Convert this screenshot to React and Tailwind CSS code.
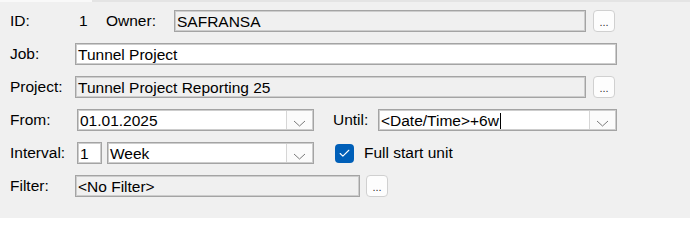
import { Check } from "lucide-react";

const FONT = { fontFamily: '"Liberation Sans", Arial, sans-serif' };

function Box({ value, width, white, caret, className = "" }) {
  return (
    <div
      className={`h-[22px] flex items-center pl-[2px] pt-px border border-[#a4a4a4] shadow-[inset_0_0_0_1px_#cdcdcd] ${white ? "bg-white" : "bg-[#f0f0f0]"} ${className}`}
      style={{ width }}
    >
      <span className="whitespace-nowrap leading-none">{value}</span>
      {caret && <span className="w-px h-[16px] bg-black ml-px" />}
    </div>
  );
}

function Combo({ value, width, caret }) {
  return (
    <div
      className="h-[22px] flex items-stretch bg-white border border-[#a4a4a4] shadow-[inset_0_0_0_1px_#cdcdcd]"
      style={{ width }}
    >
      <div className="flex-1 flex items-center pl-[2px] pt-px">
        <span className="whitespace-nowrap leading-none">{value}</span>
        {caret && <span className="w-px h-[16px] bg-black ml-px" />}
      </div>
      <div className="w-[26px] m-px border-l border-[#d6d6d6] bg-[#fbfbfb] flex items-end justify-center pb-[2px]">
        <svg width="13" height="7" viewBox="0 0 13 7">
          <path d="M1 1 L6.5 6 L12 1" fill="none" stroke="#7a7a7a" strokeWidth="1" />
        </svg>
      </div>
    </div>
  );
}

function Dots() {
  return (
    <button className="w-[22px] h-[22px] rounded-[4px] bg-[#fdfdfd] border border-[#d0d0d0] flex items-end justify-center pb-[3px] text-[11px] leading-none text-[#333]">
      ...
    </button>
  );
}

export default function App() {
  return (
    <div className="w-[690px] h-[218px] bg-[#f0f0f0] text-[15.5px] text-black" style={FONT}>
      {/* tab strip remnant */}
      <div className="flex h-[2px]">
        <div className="w-[92px] bg-[#f9f9f9]" />
        <div className="flex-1 bg-[#e4e4e4]" />
      </div>

      <div className="flex flex-col gap-[11px] pt-[8px] pl-[10px]">
        {/* ID / Owner */}
        <div className="flex items-center h-[22px]">
          <span className="w-[69px]">ID:</span>
          <span className="w-[27px]">1</span>
          <span className="w-[68px]">Owner:</span>
          <Box value="SAFRANSA" width={412} />
          <div className="ml-[7px]"><Dots /></div>
        </div>

        {/* Job */}
        <div className="flex items-center h-[22px]">
          <span className="w-[65px]">Job:</span>
          <Box value="Tunnel Project" width={542} white />
        </div>

        {/* Project */}
        <div className="flex items-center h-[22px]">
          <span className="w-[65px]">Project:</span>
          <Box value="Tunnel Project Reporting 25" width={511} />
          <div className="ml-[7px]"><Dots /></div>
        </div>

        {/* From / Until */}
        <div className="flex items-center h-[22px]">
          <span className="w-[67px]">From:</span>
          <Combo value="01.01.2025" width={237} />
          <span className="ml-[19px] w-[45px]">Until:</span>
          <Combo value="<Date/Time>+6w" width={239} caret />
        </div>

        {/* Interval */}
        <div className="flex items-center h-[22px]">
          <span className="w-[67px]">Interval:</span>
          <Box value="1" width={25} white />
          <div className="ml-[5px]"><Combo value="Week" width={207} /></div>
          <div className="ml-[21px] w-[19px] h-[19px] rounded-[4px] bg-[#005fb8] flex items-center justify-center">
            <Check size={13} strokeWidth={2} color="white" />
          </div>
          <span className="ml-[10px]">Full start unit</span>
        </div>

        {/* Filter */}
        <div className="flex items-center h-[22px]">
          <span className="w-[65px]">Filter:</span>
          <Box value="<No Filter>" width={285} />
          <div className="ml-[6px]"><Dots /></div>
        </div>
      </div>
    </div>
  );
}
